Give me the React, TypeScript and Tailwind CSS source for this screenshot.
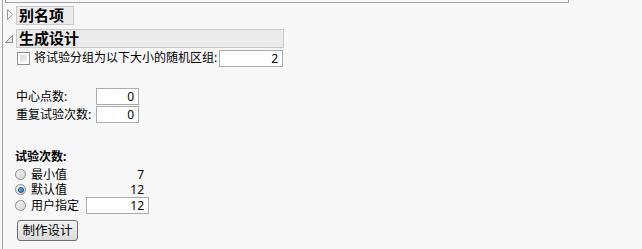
import React from 'react';

function ValueInput({ value, width }: { value: string; width: string }) {
  return (
    <div
      className={`${width} h-[17px] bg-white border border-[#ababab] text-right pr-[4px] leading-[15px]`}
    >
      {value}
    </div>
  );
}

function Radio({ checked }: { checked?: boolean }) {
  return (
    <div className="w-[11px] h-[11px] rounded-full border border-[#8c8c8c] bg-gradient-to-br from-[#f4f4f4] to-[#d4d4d4] flex items-center justify-center shrink-0">
      {checked && (
        <div className="w-[6px] h-[6px] rounded-full bg-gradient-to-br from-[#7ec8f0] to-[#1a6fb0] border border-[#1d4f80]" />
      )}
    </div>
  );
}

export default function App() {
  const runs = [
    { label: '最小值', value: '7', checked: false },
    { label: '默认值', value: '12', checked: true },
  ];

  return (
    <div className="w-[642px] h-[249px] overflow-hidden bg-[#f7f7f7] text-[12px] text-black font-['Noto_Sans','Noto_Sans_CJK_SC',sans-serif]">
      <div className="ml-[2px] h-full border-l border-[#a3a3a3]">
        {/* end of the outline box above */}
        <div className="ml-[2px] w-[564px] h-[3px] border-x border-b border-[#a3a3a3]" />

        {/* 别名项 (collapsed) */}
        <div className="mt-[3px] flex items-start h-[19px]">
          <div className="w-[13px] shrink-0 pl-[4px] pt-[3px]">
            <svg width="6" height="11" viewBox="0 0 6 11">
              <path d="M0.5 0.5 L5.5 5.5 L0.5 10.5 Z" fill="#fafafa" stroke="#9a9a9a" />
            </svg>
          </div>
          <div className="w-[58px] h-[19px] bg-[#ebebeb] border border-[#c9c9c9] pl-[2px] font-bold text-[15px] leading-[17px]">
            别名项
          </div>
        </div>

        {/* 生成设计 (open) */}
        <div className="mt-[4px] flex items-start h-[19px]">
          <div className="w-[13px] shrink-0 pl-[2px] pt-[6px]">
            <svg width="8" height="8" viewBox="0 0 8 8">
              <path d="M7.5 0.5 L7.5 7.5 L0.5 7.5 Z" fill="#e4e4e4" stroke="#8a8a8a" />
            </svg>
          </div>
          <div className="w-[268px] h-[19px] bg-[#ebebeb] border border-[#c9c9c9] pl-[2px] font-bold text-[15px] leading-[17px]">
            生成设计
          </div>
        </div>

        <div className="mt-[1px] pl-[14px] flex items-center h-[18px]">
          <div className="w-[13px] h-[13px] border border-[#8f8f8f] bg-white p-[2px] shrink-0">
            <div className="w-full h-full bg-gradient-to-br from-[#d8d8d8] to-[#f4f4f4]" />
          </div>
          <span className="ml-[4px] w-[185px] leading-[16px]">将试验分组为以下大小的随机区组:</span>
          <ValueInput value="2" width="w-[64px]" />
        </div>

        <div className="mt-[21px] pl-[13px] flex flex-col gap-[1px]">
          <div className="flex items-center h-[17px]">
            <span className="w-[80px] leading-[16px]">中心点数:</span>
            <ValueInput value="0" width="w-[43px]" />
          </div>
          <div className="flex items-center h-[17px]">
            <span className="w-[80px] leading-[16px]">重复试验次数:</span>
            <ValueInput value="0" width="w-[43px]" />
          </div>
        </div>

        <div className="mt-[26px] pl-[12px]">
          <div className="h-[16px] leading-[16px] font-bold">试验次数:</div>
          <div className="mt-[2px] flex flex-col">
            {runs.map((r) => (
              <div key={r.label} className="flex items-center h-[15px]">
                <div className="w-[71px] flex items-center">
                  <Radio checked={r.checked} />
                  <span className="ml-[5px] leading-[14px]">{r.label}</span>
                </div>
                <div className="w-[63px] text-right pr-[5px] leading-[14px]">{r.value}</div>
              </div>
            ))}
            <div className="flex items-center h-[17px]">
              <div className="w-[71px] flex items-center">
                <Radio />
                <span className="ml-[5px] leading-[14px]">用户指定</span>
              </div>
              <ValueInput value="12" width="w-[63px]" />
            </div>
          </div>
          <button className="mt-[6px] ml-[2px] w-[61px] h-[21px] rounded-[3px] border border-[#707070] bg-gradient-to-b from-[#f3f3f3] to-[#dadada] text-[12.5px] leading-[17px] text-black">
            制作设计
          </button>
        </div>
      </div>
    </div>
  );
}
